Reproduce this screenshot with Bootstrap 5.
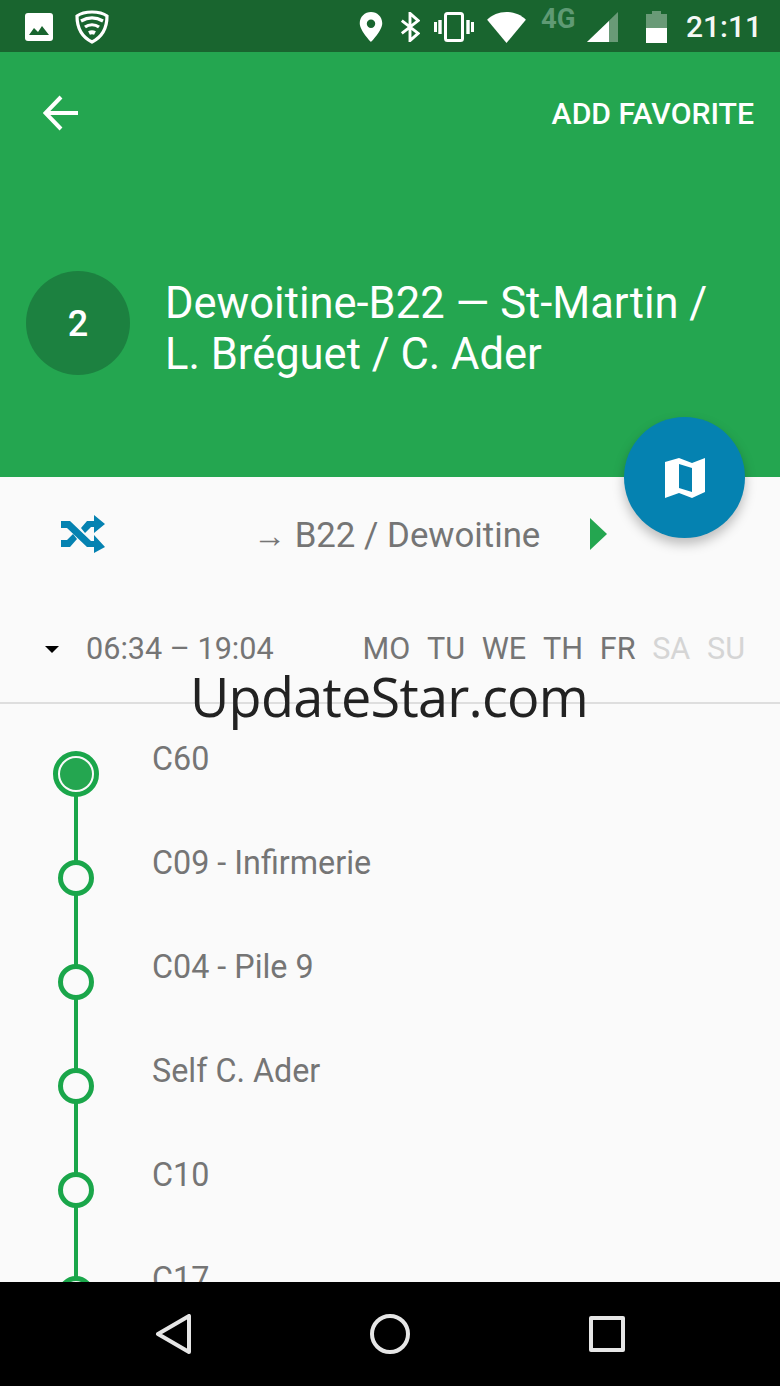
<!DOCTYPE html>
<html lang="en">
<head>
  <meta charset="UTF-8">
  <meta name="viewport" content="width=device-width, initial-scale=1.0"/>
  <title>Dewoitine-B22</title>
  <link href="https://cdn.jsdelivr.net/npm/bootstrap@5.3.0/dist/css/bootstrap.min.css" rel="stylesheet"/>
  <style>
    html, body { height: 100%; }
    body { margin: 0; background: #000; font-family: Roboto, "Liberation Sans", sans-serif; overflow: hidden; }
    .ecran { height: 1386px; width: 780px; position: relative; background: #fafafa; overflow: hidden; }
    .barre-etat { height: 52px; background: #19652f; color: #fff; padding: 2px 18px 0 25px; flex: none; }
    .barre-etat .heure { font-size: 30px; font-weight: 500; line-height: 1; color: #f4f8f5; }
    .quatre-g { font-size: 27.5px; font-weight: 700; line-height: 19px; color: #5f9a74; align-self: flex-start; margin-top: 7px; width: 36px; }
    .e13 { margin-left: 13px; }
    .e14 { margin-left: 14px; }
    .e15 { margin-left: 15px; }
    .e17 { margin-left: 17px; }
    .e19 { margin-left: 19px; }
    .e21 { margin-left: 21px; }
    .e10 { margin-left: 10px; }
    .e28 { margin-left: 28px; }
    .entete { height: 425px; background: #24a650; color: #fff; flex: none; }
    .entete-haut { padding: 43px 26px 0 43px; height: 219px; }
    .ajout-favori { font-size: 30.2px; font-weight: 500; line-height: 38px; }
    .titre-ligne { padding-left: 26px; gap: 35px; }
    .pastille { width: 104px; height: 104px; border-radius: 50%; background: #1c8140; font-size: 36px; font-weight: 500; flex: none; padding-top: 2px; }
    .titre-texte { font-size: 43.5px; line-height: 51px; margin: 7px 0 0; font-weight: 400; white-space: nowrap; }
    .fab { position: absolute; left: 624px; top: 417px; width: 121px; height: 121px; border-radius: 50%; background: #0582b1; box-shadow: 0 6px 12px rgba(0,0,0,.25); }
    .direction { height: 113px; padding-left: 60px; flex: none; }
    .direction-nom { font-size: 34.8px; color: #757575; margin: 3px 0 0 147px; width: 336px; line-height: 1; white-space: nowrap; }
    .direction-nom .fleche { font-size: 33px; }
    .horaires { height: 114px; padding: 6px 35px 0 45px; border-bottom: 2px solid #dedede; flex: none; color: #757575; font-size: 30.6px; }
    .triangle { width: 0; height: 0; border-left: 7.5px solid transparent; border-right: 7.5px solid transparent; border-top: 7px solid #000; margin-right: 27px; }
    .jours { gap: 16.7px; }
    .jours .off { color: #d5d5d5; }
    .arrets { padding-top: 18px; overflow: hidden; flex: 1 1 auto; min-height: 0; }
    .arret { height: 104px; position: relative; padding-left: 152px; }
    .arret::before { content: ""; position: absolute; left: 74px; top: 0; bottom: 0; width: 4px; background: #1aa64a; }
    .arret:first-child::before { top: 52px; }
    .point { position: absolute; left: 58px; top: 34px; width: 36px; height: 36px; border-radius: 50%; background: #fafafa; border: 5px solid #1aa64a; }
    .point-actif { left: 53px; top: 29px; width: 46px; height: 46px; padding: 2px; }
    .point-actif span { display: block; width: 100%; height: 100%; border-radius: 50%; background: #24a650; }
    .arret-nom { font-size: 32.3px; color: #757575; line-height: 40px; padding-top: 17px; }
    .barre-nav { height: 104px; background: #000; flex: none; padding: 0 155px; }
    .filigrane { position: absolute; left: 190px; top: 658px; font-family: "Open Sans", "Noto Sans", sans-serif; font-size: 54px; letter-spacing: -0.75px; line-height: 76px; color: #222; white-space: nowrap; }
  </style>
</head>
<body>
<div class="ecran d-flex flex-column">

  <div class="barre-etat d-flex align-items-center">
    <svg width="28" height="28" viewBox="0 0 28 28"><rect width="28" height="28" rx="3" fill="#fff"/><path d="M4 22l5-7 4 4 4-6 7 9z" fill="#19652f"/></svg>
    <svg class="e21" width="36" height="34" viewBox="0 0 36 34" fill="none" stroke="#fff" stroke-width="3.200"><path d="M18 2c6 0 11 1 15 4 0 12-5 21-15 26C8 27 3 18 3 6c4-3 9-4 15-4z"/><path d="M7 11c7-4 15-4 22 0M11 17c4-3 10-3 14 0"/><path d="M15 23c2-1 4-1 6 0" stroke-width="4"/></svg>
    <div class="ms-auto d-flex align-items-center align-self-stretch">
      <svg width="24" height="30" viewBox="0 0 24 32"><path fill-rule="evenodd" d="M12 0C5.500 0 0 5 0 12c0 8 12 20 12 20s12-12 12-20C24 5 18.500 0 12 0zm0 8a4.500 4.500 0 110 9 4.500 4.500 0 010-9z" fill="#fff"/></svg>
      <svg class="e17" width="20" height="30" viewBox="0 0 22 32" fill="none" stroke="#fff" stroke-width="3.200"><path d="M2 9l18 14-9 8V1l9 8L2 23"/></svg>
      <svg class="e14" width="40" height="30" viewBox="0 0 40 30" fill="none" stroke="#fff"><rect x="11.500" y="1.500" width="17" height="27" rx="2" stroke-width="3"/><path d="M6 8v14M34 8v14" stroke-width="3.400"/><path d="M1.500 10v10M38.500 10v10" stroke-width="3"/></svg>
      <svg class="e13" width="39" height="31" viewBox="0 0 40 32"><path d="M20 32L0 8c5-5 12-8 20-8s15 3 20 8z" fill="#fff"/></svg>
      <span class="quatre-g e15">4G</span>
      <svg class="e10" width="31" height="30" viewBox="0 0 31 30"><path d="M0 30L31 0v30z" fill="#fff" opacity=".35"/><path d="M0 30l22-21v21z" fill="#fff"/></svg>
      <svg class="e28" width="21" height="32" viewBox="0 0 21 32"><path d="M6 0h9v3h6v14H0V3h6z" fill="#fff" opacity=".35"/><path d="M0 17h21v15H0z" fill="#fff"/></svg>
      <span class="heure e19">21:11</span>
    </div>
  </div>

  <div class="entete">
    <div class="entete-haut d-flex justify-content-between align-items-start">
      <svg width="36" height="36" viewBox="0 0 36 36" fill="none" stroke="#fff" stroke-width="4"><path d="M35 18H3M18 2L2.500 18 18 34"/></svg>
      <span class="ajout-favori">ADD FAVORITE</span>
    </div>
    <div class="titre-ligne d-flex align-items-start">
      <div class="pastille d-flex align-items-center justify-content-center">2</div>
      <h1 class="titre-texte">Dewoitine-B22 — St-Martin /<br>L. Bréguet / C. Ader</h1>
    </div>
  </div>

  <div class="fab d-flex align-items-center justify-content-center">
    <svg width="40" height="40" viewBox="0 0 40 40"><path fill-rule="evenodd" d="M0 4l14-4 13 5 13-5v34l-13 6-13-5-14 5zM14 6v24l13 4V10z" fill="#fff"/></svg>
  </div>

  <div class="direction d-flex align-items-center">
    <svg width="46" height="38" viewBox="0 0 46 38" fill="#0582b1"><path d="M1 6h9l21 20h3v-6l11 12-11 6v-6h-7L7 13H1zM1 25h6l6-6 4 5-7 8H1zM27 6h7V0l11 9-11 9v-6h-3l-6 6-4-5z"/></svg>
    <div class="direction-nom"><span class="fleche">→</span> B22 / Dewoitine</div>
    <svg width="18" height="32" viewBox="0 0 18 32"><path d="M1 0l17 16L1 32z" fill="#24a650"/></svg>
  </div>

  <div class="horaires d-flex align-items-center">
    <div class="triangle"></div>
    <span>06:34 – 19:04</span>
    <div class="jours d-flex ms-auto">
      <span>MO</span><span>TU</span><span>WE</span><span>TH</span><span>FR</span><span class="off">SA</span><span class="off">SU</span>
    </div>
  </div>

  <div class="arrets">
    <div class="arret"><div class="point point-actif"><span></span></div><div class="arret-nom">C60</div></div>
    <div class="arret"><div class="point"></div><div class="arret-nom">C09 - Infirmerie</div></div>
    <div class="arret"><div class="point"></div><div class="arret-nom">C04 - Pile 9</div></div>
    <div class="arret"><div class="point"></div><div class="arret-nom">Self C. Ader</div></div>
    <div class="arret"><div class="point"></div><div class="arret-nom">C10</div></div>
    <div class="arret"><div class="point"></div><div class="arret-nom">C17</div></div>
  </div>

  <div class="barre-nav d-flex align-items-center justify-content-between">
    <svg width="36" height="40" viewBox="0 0 36 40" fill="none" stroke="#e6e6e6" stroke-width="4" stroke-linejoin="round"><path d="M34 2v36L3 20z"/></svg>
    <svg width="40" height="40" viewBox="0 0 40 40" fill="none" stroke="#e6e6e6" stroke-width="4"><circle cx="20" cy="20" r="18"/></svg>
    <svg width="36" height="36" viewBox="0 0 36 36" fill="none" stroke="#e6e6e6" stroke-width="4" stroke-linejoin="round"><rect x="2" y="2" width="32" height="32"/></svg>
  </div>

  <div class="filigrane">UpdateStar.com</div>
</div>
</body>
</html>
